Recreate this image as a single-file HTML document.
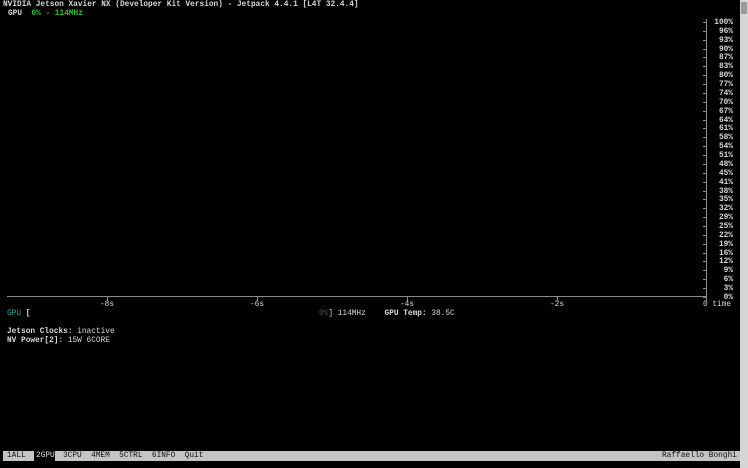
<!DOCTYPE html>
<html><head><meta charset="utf-8"><style>
html,body{margin:0;padding:0;background:#000;width:748px;height:468px;overflow:hidden;position:relative}
.t{position:absolute;font-family:"Liberation Mono",monospace;font-size:7.8px;line-height:9px;color:#d8d8d8;white-space:pre;font-weight:bold}
.n{font-weight:normal}
.g{color:#2ec52e}
.c{color:#20a8b0}
.d{color:#555}
.l{position:absolute;background:#8a8a8a}
</style></head><body>
<div class="t" style="left:3px;top:1px">NVIDIA Jetson Xavier NX (Developer Kit Version) - Jetpack 4.4.1 [L4T 32.4.4]</div>
<div class="t" style="left:8px;top:10px">GPU  <span class="g">0% - 114MHz</span></div>

<div class="l" style="left:7px;top:296px;width:700px;height:1px"></div>
<div class="l" style="left:706px;top:19px;width:1px;height:282px"></div>
<div class="l" style="left:107px;top:297px;width:1px;height:4px"></div>
<div class="l" style="left:257px;top:297px;width:1px;height:4px"></div>
<div class="l" style="left:407px;top:297px;width:1px;height:4px"></div>
<div class="l" style="left:557px;top:297px;width:1px;height:4px"></div>

<div class="t n" style="left:100px;top:301px">-8s</div>
<div class="t n" style="left:250px;top:301px">-6s</div>
<div class="t n" style="left:400px;top:301px">-4s</div>
<div class="t n" style="left:550px;top:301px">-2s</div>
<div class="t n" style="left:703px;top:301px">0 time</div>

<div id="ax" style="position:absolute;right:15px;top:19px;width:30px"></div>

<div class="t" style="left:7px;top:310px"><span class="c n">GPU</span> [</div>
<div class="t n" style="left:319px;top:310px"><span class="d">0%</span>] 114MHz    <b>GPU Temp:</b> 38.5C</div>
<div class="t" style="left:7px;top:328px">Jetson Clocks: <span class="n">inactive</span></div>
<div class="t" style="left:7px;top:337px">NV Power[2]: <span class="n">15W 6CORE</span></div>

<div style="position:absolute;left:3px;top:451px;width:31px;height:10px;background:#c4c4c4"></div>
<div style="position:absolute;left:55px;top:451px;width:685px;height:10px;background:#c4c4c4"></div>
<div class="t n" style="left:7px;top:452px;color:#111">1ALL</div>
<div class="t n" style="left:36px;top:452px;color:#ddd">2GPU</div>
<div class="t n" style="left:63px;top:452px;color:#111">3CPU  4MEM  5CTRL  6INFO  Quit</div>
<div class="t n" style="left:662px;top:452px;color:#111">Raffaello Bonghi</div>
<div style="position:absolute;left:740px;top:0;width:8px;height:468px;background:#d6d6d6"></div>
<div style="position:absolute;left:741px;top:2px;width:6px;height:12px;background:#9a9a9a"></div>
<script>
var v=[100,96,93,90,87,83,80,77,74,70,67,64,61,58,54,51,48,45,41,38,35,32,29,25,22,19,16,12,9,6,3,0],h='';
for(var i=0;i<v.length;i++){var y=i*8.87;h+='<div class="t" style="right:0;top:'+(y)+'px">'+v[i]+'%</div>';}
document.getElementById('ax').innerHTML=h;
var tk='';for(var i=0;i<v.length;i++){tk+='<div class="l" style="left:703px;top:'+(22+i*8.87)+'px;width:3px;height:1px"></div>';}
document.body.insertAdjacentHTML('beforeend',tk);
</script>
</body></html>
